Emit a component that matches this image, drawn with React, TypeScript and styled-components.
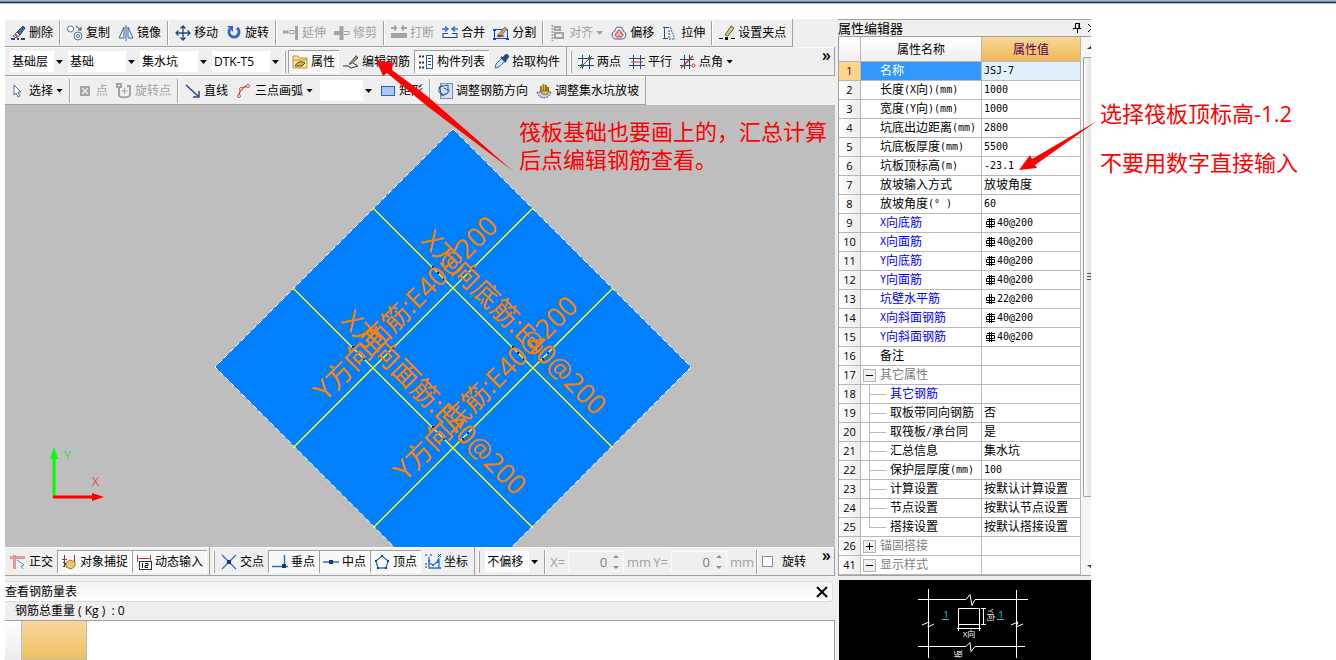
import React, { Fragment, ReactNode } from "react";
import styled, { createGlobalStyle, css } from "styled-components";

const UI_FONT = '"Open Sans", "Noto Sans CJK SC", sans-serif';
const FACE = "#efefef";
const EDGE = "#a0a0a0";

const GlobalStyle = createGlobalStyle`
  * { box-sizing: border-box; }
  body { margin: 0; background: #fff; color: #000; font: 12px/16px ${UI_FONT}; }
  button, input, select { font: inherit; color: inherit; margin: 0; }
  svg { display: block; flex: none; }
`;

/* ---------- page frame ---------- */

const Page = styled.div`
  display: flex;
  flex-direction: column;
  height: 100vh;
  overflow: hidden;
`;

const TopEdge = styled.div`
  flex: none;
  height: 4px;
  background: linear-gradient(#9db8d2 0 1px, #6f8ea9 1px 2px, #1d3448 2px 3px, #b9bfc1 3px);
`;

const Body = styled.div`
  flex: 1;
  min-height: 0;
  display: flex;
  padding: 15px 0 0 5px;
`;

const AppWindow = styled.div`
  flex: 1;
  min-width: 0;
  display: flex;
  gap: 3px;
  background: ${FACE};
`;

const Workspace = styled.main`
  position: relative;
  flex: 1;
  min-width: 0;
  display: flex;
  flex-direction: column;
`;

/* ---------- toolbars ---------- */

const ToolRow = styled.div<{ $short?: boolean }>`
  flex: none;
  display: flex;
  height: ${(p) => (p.$short ? 28 : 29)}px;
`;

const Strip = styled.div<{ $grow?: boolean; $grip?: boolean }>`
  display: flex;
  align-items: center;
  flex: ${(p) => (p.$grow ? "1" : "none")};
  min-width: 0;
  padding-top: 1px;
  padding-left: ${(p) => (p.$grip ? 3 : 1)}px;
  padding-right: ${(p) => (p.$grow ? 0 : 2)}px;
  border: solid ${EDGE};
  border-width: 0 1px 1px 0;
  box-shadow: inset 0 1px #fafafa;
`;

const Grip = styled.span`
  flex: none;
  width: 2px;
  height: 22px;
  margin-right: 2px;
  border-left: 1px solid #fff;
  border-right: 1px solid ${EDGE};
`;

const Divider = styled.span`
  flex: none;
  width: 2px;
  height: 24px;
  margin: 0 2px;
  border-left: 1px solid ${EDGE};
  border-right: 1px solid #fff;
`;

const pressedLook = css`
  background: #f8f8f8;
  box-shadow: inset 1px 1px ${EDGE}, inset -1px -1px #fff;
`;

const ToolButton = styled.button<{ $pressed?: boolean }>`
  flex: none;
  display: flex;
  align-items: center;
  gap: 3px;
  height: 23px;
  padding: 0 4px;
  border: 0;
  background: none;
  white-space: nowrap;
  &:disabled { color: #a2a2a2; }
  ${(p) => p.$pressed && pressedLook}
`;

const Caret = styled.span`
  width: 7px;
  height: 4px;
  background: currentColor;
  clip-path: polygon(0 0, 100% 0, 50% 100%);
`;

const Overflow = styled.button`
  flex: none;
  align-self: flex-start;
  margin-left: auto;
  padding: 0 3px;
  border: 0;
  background: none;
  font-size: 16px;
  line-height: 14px;
  font-weight: 600;
`;

const ComboBox = styled.span<{ $w: number }>`
  flex: none;
  position: relative;
  width: ${(p) => p.$w}px;
  height: 21px;
  background: #fff;
`;

const ComboSelect = styled.select`
  appearance: none;
  width: 100%;
  height: 100%;
  padding: 0 0 0 2px;
  border: 0;
  border-radius: 0;
  background: linear-gradient(${FACE}, ${FACE}) right / 10px 100% no-repeat #fff;
`;

const ComboCaret = styled(Caret)`
  position: absolute;
  right: 1px;
  top: 9px;
  pointer-events: none;
`;

const ComboGroup = styled.div<{ $inset?: boolean }>`
  display: flex;
  gap: 4px;
  margin: 0 ${(p) => (p.$inset ? 3 : 4)}px;
`;

function Combo({ label, options, width }: { label: string; options: string[]; width: number }) {
  return (
    <ComboBox $w={width}>
      <ComboSelect aria-label={label} defaultValue={options[0]}>
        {options.map((o) => (
          <option key={o}>{o}</option>
        ))}
      </ComboSelect>
      <ComboCaret />
    </ComboBox>
  );
}

/* ---------- icons ---------- */

const NAVY = "#26477c";
const GREY = "#a3a3a3";

const icons: Record<string, ReactNode> = {
  erase: (
    <>
      <path d="M1 14h4M7 14h2M11 14h4" stroke={NAVY} strokeWidth="2" />
      <path d="M3 11l5-5 3 3-5 4z" fill="#fff" stroke="#34588c" />
      <path d="M7 7l6-6 2 2-5 7z" fill="#3c69ad" stroke={NAVY} />
      <path d="M5 9l3 3" stroke="#d4542e" strokeWidth="2" />
    </>
  ),
  copy: (
    <>
      <circle cx="3.500" cy="4" r="3" fill="#fff" stroke="#5a7287" />
      <circle cx="11" cy="11" r="4" fill="#e6eef5" stroke="#5a7287" />
      <circle cx="11" cy="11" r="1.500" fill="none" stroke="#5a7287" />
      <path d="M9 1l5 4M14 2v3h-3" fill="none" stroke={NAVY} />
    </>
  ),
  mirror: (
    <>
      <path d="M6 2v11H1zM10 2v11h5z" fill="#e3eefb" stroke="#3465a8" />
      <path d="M8 0v16" stroke="#3465a8" />
    </>
  ),
  move: (
    <path
      d="M8 1v14M1 8h14M5.500 3.500L8 1l2.500 2.500M5.500 12.500L8 15l2.500-2.500M3.500 5.500L1 8l2.500 2.500M12.500 5.500L15 8l-2.500 2.500"
      fill="none"
      stroke={NAVY}
      strokeWidth="1.300"
    />
  ),
  rotate: (
    <>
      <path d="M4 4a5 5 0 1 0 7-1" fill="none" stroke="#3567c2" strokeWidth="3" />
      <path d="M1 1h6v6z" fill="#3567c2" />
    </>
  ),
  extend: (
    <>
      <path d="M13.500 1v14" stroke={GREY} strokeWidth="3" />
      <path d="M0 7h5" stroke={GREY} strokeWidth="3" />
      <path d="M6 5.500h5v3H6z" fill="none" stroke={GREY} />
    </>
  ),
  trim: (
    <>
      <path d="M7.500 1v14" stroke={GREY} strokeWidth="4" />
      <path d="M0 8h6" stroke={GREY} strokeWidth="4" />
      <path d="M10 6.500h5v3h-5" fill="none" stroke={GREY} />
    </>
  ),
  breakLine: (
    <>
      <path d="M0 3h6M10 3h6M4 0.500v5M12 0.500v5" stroke={GREY} strokeWidth="2" />
      <path d="M0 10.500h16" stroke={GREY} strokeWidth="5" />
    </>
  ),
  merge: (
    <>
      <path d="M0 4h5M16 4h-5M3 1.500L6 4 3 6.500M13 1.500L10 4l3 2.500" fill="none" stroke="#3a6fc4" strokeWidth="1.500" />
      <path d="M1 8.500h5M10 8.500h5M1 12.500h14M1 8v5M15 8v5" stroke={NAVY} fill="none" />
    </>
  ),
  split: (
    <>
      <rect x="1.500" y="4.500" width="13" height="9" fill="#dce9ff" stroke="#1746c8" />
      <path d="M0 14h3M13 14h3M0 5h3" stroke="#1746c8" strokeWidth="2" />
      <path d="M4 11l8-9 2 2-7 8z" fill="#d99a5b" stroke="#774" />
      <path d="M5 11h6" stroke="#112" />
    </>
  ),
  align: (
    <>
      <path d="M2.500 0v16" stroke={GREY} strokeDasharray="2 1" strokeWidth="2" />
      <path d="M5 2h5v3H5zM5 8h8v5H5z" fill="none" stroke={GREY} strokeWidth="2" />
    </>
  ),
  offset: (
    <>
      <path d="M8 2c3 0 4 2 4 4 4 1 4 8-1 8H5C0 14 0 7 4 6c0-2 1-4 4-4z" fill="#edf1f8" stroke="#3c5f96" />
      <path d="M8 5c1 0 2 1 2 3 3 0 2 4 0 4H6c-2 0-3-4 0-4 0-2 1-3 2-3z" fill="#f5a9a0" stroke="#cc3d34" />
    </>
  ),
  stretch: (
    <>
      <path d="M2.500 2v12M1 2.500h6M1 13.500h5" stroke="#2c5599" />
      <path d="M8 2l5 12M7 5v9h6" fill="none" stroke="#2c5599" strokeDasharray="2 1" />
    </>
  ),
  grips: (
    <>
      <path d="M0 13.500h4M12 13.500h4" stroke="#111" />
      <path d="M6 12h3v3H6z" fill="#111" />
      <path d="M6 10l6-9 3 2-6 8z" fill="#dcc98a" stroke="#665a30" />
    </>
  ),
  props: (
    <>
      <path d="M1 14V2h5l2 2h7v10z" fill="#fbe2a0" stroke="#cf8d2a" />
      <path d="M1 6h14" stroke="#cf8d2a" />
      <path d="M3 12c3-5 6-5 10-3l-3 3z" fill="#d8b04a" stroke="#4a4a2a" />
    </>
  ),
  editBar: (
    <>
      <path d="M0 12h5l3 2 7-2M10 9l5 3" fill="none" stroke="#333" />
      <path d="M6 10l7-8 2 2-7 6z" fill="#8fa678" stroke="#5a5a34" />
      <path d="M12 3l1-2 2 2z" fill="#c0452c" />
    </>
  ),
  list: (
    <>
      <path d="M1 2.500h5M1 8.500h5M1 13.500h5" stroke="#333" strokeDasharray="2 1" strokeWidth="2" />
      <rect x="8.500" y="1.500" width="6" height="13" fill="#fff" stroke="#2c5599" />
      <path d="M10 4.500h3M10 7.500h3M10 10.500h3" stroke="#2c5599" />
    </>
  ),
  picker: (
    <>
      <path d="M2 14l1-4 6-6 3 3-6 6z" fill="#cfe3f6" stroke="#326fae" />
      <path d="M8 3l5 5M10 5l2-3c2-2 4 0 2 2l-2 3z" fill="#204a86" stroke="#204a86" strokeWidth="2" />
    </>
  ),
  twoPoint: (
    <>
      <path d="M4.500 1v14M11.500 1v14M0 4.500h16M0 11.500h16" stroke={NAVY} />
      <path d="M2 14L14 2" stroke="#b02a2a" />
      <path d="M3 10h3v3H3zM10 3h3v3h-3z" fill="#2f7a2f" />
    </>
  ),
  parallel: (
    <>
      <path d="M4.500 1v14M11.500 1v14" stroke={NAVY} />
      <path d="M0 4.500h16" stroke={NAVY} />
      <path d="M0 11.500h16" stroke={NAVY} />
      <path d="M2 8h12" stroke="#c03434" />
    </>
  ),
  pointAngle: (
    <>
      <path d="M4.500 1v14M9.500 1v14M0 5.500h14M0 11.500h11" stroke={NAVY} />
      <path d="M1 14L13 2" stroke="#c03434" strokeWidth="1.500" />
      <circle cx="13.500" cy="11.500" r="1.500" fill="none" stroke="#d22" />
    </>
  ),
  cursor: <path d="M4 2v10l2-2 2 4 2-1-2-4h3z" fill="#fff" stroke="#5b6f92" />,
  point: (
    <>
      <path d="M3 3h10v10H3z" fill={GREY} />
      <path d="M5 5l6 6M11 5l-6 6" stroke="#eee" strokeWidth="1.500" />
    </>
  ),
  rotatePoint: (
    <>
      <path d="M1 1h4v3H1zM3 4v8c0 3 10 3 11 0V3h-3" fill="none" stroke={GREY} strokeWidth="2" />
      <path d="M8.500 5v6M5.500 8h6" stroke={GREY} />
    </>
  ),
  line: (
    <>
      <path d="M1 2l12 11" stroke={NAVY} strokeWidth="1.500" />
      <path d="M14 8v6H8" fill="none" stroke={NAVY} strokeWidth="1.500" />
    </>
  ),
  arc: (
    <>
      <path d="M3 14C3 7 7 3 13 3" fill="none" stroke="#c8503c" strokeWidth="1.500" />
      <circle cx="3" cy="13" r="1.500" fill="#fff" stroke="#c8503c" />
      <circle cx="5" cy="6" r="1.500" fill="#fff" stroke="#c8503c" />
      <circle cx="12" cy="3" r="1.500" fill="#fff" stroke="#c8503c" />
    </>
  ),
  rect: <rect x="1.500" y="3.500" width="13" height="9" fill="#a9c7f8" stroke="#2a5bc0" />,
  barDir: (
    <>
      <rect x="3.500" y="0.500" width="12" height="15" fill="#d3e1f6" stroke="#6f8fc0" />
      <path d="M2 4l9-2v8l-6 3zM5 2c-6 5-3 11 4 9M7 5l6 3" fill="none" stroke="#35598f" />
    </>
  ),
  slope: (
    <>
      <path d="M1 9c2 8 12 8 14 0z" fill="#bcd4f2" stroke="#3562a4" strokeDasharray="2 1" />
      <path d="M5 8V3M7.500 8V1M10 8V2M12 8V4" stroke="#a07a10" strokeWidth="2" />
      <path d="M4 8h9c0 4-6 5-9 0z" fill="#f1c94c" stroke="#80600c" />
    </>
  ),
  ortho: (
    <>
      <path d="M0 3.500h15M4.500 1v14" stroke="#dd9b9b" strokeWidth="3" />
      <path d="M7 6l7 5-3 1 2 3" fill="#fff" stroke="#6a7fa0" />
    </>
  ),
  snap: (
    <>
      <path d="M3.500 1v12M13.500 1v8M1 5.500h5" stroke="#9b3434" />
      <path d="M5 9l4-3 5 2v4l-4 3-5-2z" fill="#e9c877" stroke="#9a7833" />
      <path d="M2 8l3 2-3 3" fill="none" stroke="#333" />
    </>
  ),
  dynamic: (
    <>
      <path d="M1.500 1v7M14.500 1v7M1 4.500h14" stroke="#b04848" />
      <rect x="3.500" y="7.500" width="12" height="8" fill="#fff" stroke="#333" />
      <path d="M6.500 9v5M9 9.500h3v2H9v2h3" fill="none" stroke="#111" />
    </>
  ),
  intersect: (
    <>
      <path d="M1 1l14 14M15 1L1 15" stroke="#2a6fd0" strokeWidth="1.300" />
      <path d="M6 6h4v4H6z" fill="#123a86" />
    </>
  ),
  perp: (
    <>
      <path d="M12.500 1v13M0 12.500h16" stroke="#2a6fd0" strokeWidth="1.500" />
      <path d="M10 10h4v4h-4z" fill="#123a86" />
    </>
  ),
  mid: (
    <>
      <path d="M0 8h16" stroke="#2a6fd0" strokeWidth="1.500" />
      <path d="M6 6h4v4H6z" fill="#123a86" />
    </>
  ),
  vertex: (
    <>
      <path d="M8 2l6 5-2 7H4L2 7z" fill="#fff" stroke="#2a6fd0" strokeWidth="1.300" />
      <path d="M7 1h2v2H7zM13 6h2v2h-2zM1 6h2v2H1zM3 13h2v2H3zM11 13h2v2h-2z" fill="#123a86" />
    </>
  ),
  coord: (
    <>
      <path d="M4 3v11h12M4 9l4 2 4-3 2-4M14 5v9" fill="none" stroke="#2a6fd0" strokeWidth="1.300" />
      <path d="M3 6h2v2H3zM7 10h2v2H7zM12 7h2v2h-2z" fill="#2a6fd0" />
      <path d="M0 1h2M5 1h2M13 0l3 3M16 0l-3 3M0 10h2M0 13h2" stroke="#123a86" />
    </>
  ),
};

function Icon({ name }: { name: string }) {
  return (
    <svg width="16" height="16" viewBox="0 0 16 16" fill="none" aria-hidden="true">
      {icons[name]}
    </svg>
  );
}

type ToolDef = { icon: string; label: string; off?: boolean; on?: boolean; menu?: boolean };

function Tools({ groups }: { groups: ToolDef[][] }) {
  return (
    <>
      {groups.map((group, g) => (
        <Fragment key={g}>
          {g > 0 && <Divider />}
          {group.map((t) => (
            <ToolButton key={t.label} type="button" disabled={t.off} $pressed={t.on} aria-pressed={t.on}>
              <Icon name={t.icon} />
              {t.label}
              {t.menu && <Caret />}
            </ToolButton>
          ))}
        </Fragment>
      ))}
    </>
  );
}

const editTools: ToolDef[][] = [
  [{ icon: "erase", label: "删除" }],
  [{ icon: "copy", label: "复制" }, { icon: "mirror", label: "镜像" }],
  [{ icon: "move", label: "移动" }, { icon: "rotate", label: "旋转" }],
  [{ icon: "extend", label: "延伸", off: true }, { icon: "trim", label: "修剪", off: true }],
  [{ icon: "breakLine", label: "打断", off: true }, { icon: "merge", label: "合并" }, { icon: "split", label: "分割" }],
  [
    { icon: "align", label: "对齐", off: true, menu: true },
    { icon: "offset", label: "偏移" },
    { icon: "stretch", label: "拉伸" },
  ],
  [{ icon: "grips", label: "设置夹点" }],
];

const componentTools: ToolDef[][] = [
  [
    { icon: "props", label: "属性", on: true },
    { icon: "editBar", label: "编辑钢筋" },
    { icon: "list", label: "构件列表", on: true },
    { icon: "picker", label: "拾取构件" },
  ],
];

const axisTools: ToolDef[][] = [
  [
    { icon: "twoPoint", label: "两点" },
    { icon: "parallel", label: "平行" },
    { icon: "pointAngle", label: "点角", menu: true },
  ],
];

const drawTools: ToolDef[][] = [
  [{ icon: "cursor", label: "选择", menu: true }],
  [{ icon: "point", label: "点", off: true }, { icon: "rotatePoint", label: "旋转点", off: true }],
  [{ icon: "line", label: "直线" }, { icon: "arc", label: "三点画弧", menu: true }],
];

const shapeTools: ToolDef[][] = [
  [{ icon: "rect", label: "矩形" }],
  [{ icon: "barDir", label: "调整钢筋方向" }, { icon: "slope", label: "调整集水坑放坡" }],
];

const modeTools: ToolDef[][] = [
  [
    { icon: "ortho", label: "正交" },
    { icon: "snap", label: "对象捕捉", on: true },
    { icon: "dynamic", label: "动态输入", on: true },
  ],
];

const snapTools: ToolDef[][] = [
  [
    { icon: "intersect", label: "交点" },
    { icon: "perp", label: "垂点", on: true },
    { icon: "mid", label: "中点", on: true },
    { icon: "vertex", label: "顶点", on: true },
    { icon: "coord", label: "坐标" },
  ],
];

/* ---------- drawing area ---------- */

const Canvas = styled.div`
  flex: 1;
  min-height: 0;
  overflow: hidden;
  background: #bebebe;
`;

const BarText = styled.text`
  font: 27px ${UI_FONT};
  fill: #ff8000;
`;

const AxisText = styled.text`
  font: 300 13px ${UI_FONT};
`;

const crossings = [
  [448, 183],
  [368, 263],
  [528, 263],
  [448, 343],
];

function Drawing() {
  return (
    <svg width="100%" height="100%" role="img" aria-label="集水坑">
      <path d="M448 24L686 262 448 501 210 262z" fill="#0080ff" stroke="#fff" strokeDasharray="5 3" />
      <path
        d="M368 103L608 343M288 183L528 423M528 103L288 343M608 183L368 423"
        stroke="#ffff00"
        strokeWidth="1.400"
      />
      {crossings.map(([x, y]) => (
        <path
          key={`${x}-${y}`}
          d={`M${x - 21} ${y - 21}h2M${x - 16} ${y - 15}h2M${x - 10} ${y - 9}h2M${x + 19} ${y - 20}h2M${x + 14} ${y - 15}h2M${x + 9} ${y - 9}h2`}
          stroke="#1020b0"
          strokeWidth="2"
        />
      ))}
      <BarText transform="translate(415 137) rotate(45)">X方向底筋:E40@200</BarText>
      <BarText transform="translate(335 217) rotate(45)">X方向面筋:E40@200</BarText>
      <BarText transform="translate(320 297) rotate(-45)">Y方向面筋:E40@200</BarText>
      <BarText transform="translate(400 377) rotate(-45)">Y方向底筋:E40@200</BarText>
      <path d="M49 392V352" stroke="#00ff00" strokeWidth="3" />
      <path d="M49 342l4 12h-8z" fill="#00ff00" />
      <path d="M48 392h41" stroke="#ff0000" strokeWidth="3" />
      <path d="M99 392l-12 4v-8z" fill="#ff0000" />
      <AxisText x="59" y="355" fill="#00e000">Y</AxisText>
      <AxisText x="87" y="381" fill="#ff0000">X</AxisText>
    </svg>
  );
}

/* ---------- offset fields ---------- */

const OffsetLabel = styled.label`
  flex: none;
  display: flex;
  align-items: center;
  gap: 3px;
  margin-left: 2px;
  color: #a2a2a2;
  font-size: 13px;
`;

const SpinBox = styled.span`
  display: flex;
  align-items: center;
  width: 56px;
  height: 21px;
  padding-right: 4px;
  border: 1px solid #fafafa;
`;

const SpinInput = styled.input`
  flex: 1;
  min-width: 0;
  padding: 0 6px 0 0;
  border: 0;
  background: none;
  text-align: right;
  color: #808080;
`;

function OffsetField({ axis }: { axis: string }) {
  return (
    <OffsetLabel>
      {axis}=
      <SpinBox>
        <SpinInput defaultValue="0" disabled />
        <svg width="6" height="14" viewBox="0 0 6 14" fill="#909090" aria-hidden="true">
          <path d="M0 3l3-3 3 3zM0 11l3 3 3-3z" />
        </svg>
      </SpinBox>
      mm
    </OffsetLabel>
  );
}

const CheckLabel = styled.label`
  flex: none;
  display: flex;
  align-items: center;
  gap: 9px;
  margin-left: 2px;
`;

const CheckBox = styled.input`
  appearance: none;
  width: 11px;
  height: 11px;
  border: 1px solid #8e8f8f;
  background: #fff;
`;

/* ---------- quantity table pane ---------- */

const QuantityPane = styled.section`
  flex: none;
  margin-top: 5px;
`;

const PaneTitle = styled.header`
  display: flex;
  align-items: center;
  justify-content: space-between;
  height: 21px;
  margin-right: 2px;
  padding-right: 3px;
  border: solid #dcdcdc;
  border-width: 1px 1px 1px 0;
  border-radius: 0 4px 4px 0;
  background: linear-gradient(#f4f4f4, #fff);
`;

const CloseButton = styled.button`
  display: flex;
  padding: 0;
  border: 0;
  background: none;
`;

const TotalLine = styled.p`
  height: 18px;
  margin: 0;
  padding-left: 10px;
  line-height: 17px;
  white-space: pre;
`;

const QuantityGrid = styled.div`
  display: flex;
  height: 40px;
  border: solid ${EDGE};
  border-width: 1px 1px 0 0;
  background: #fff;
`;

const GridCorner = styled.span`
  width: 16px;
  background: linear-gradient(#fff, #ececec);
`;

const GridHead = styled.span`
  width: 66px;
  border: 1px solid #bdbdbd;
  border-top: 0;
  background: linear-gradient(#f9d79c, #efc060);
`;

/* ---------- property editor ---------- */

const Inspector = styled.aside`
  position: relative;
  flex: none;
  width: 253px;
  display: flex;
  flex-direction: column;
`;

const InspectorTitle = styled.header`
  flex: none;
  display: flex;
  align-items: center;
  height: 18px;
  border: solid ${EDGE};
  border-width: 1px 0;
  font-size: 13px;
`;

const TitleIcons = styled.span`
  margin-left: auto;
`;

const PropertyArea = styled.div`
  flex: none;
  display: flex;
  border-bottom: 1px solid ${EDGE};
  border-left: 1px solid ${EDGE};
  background: #fff;
`;

const PropertyTable = styled.table`
  width: 242px;
  table-layout: fixed;
  border-collapse: separate;
  border-spacing: 0;
`;

const HeadCell = styled.th<{ $w: number; $hot?: boolean }>`
  width: ${(p) => p.$w}px;
  height: 25px;
  padding: 1px 0 0;
  border: solid #b8b8b8;
  border-width: 0 1px 1px 0;
  font-weight: 400;
  background: ${(p) => (p.$hot ? "linear-gradient(#f9d795, #edb95c)" : "linear-gradient(#fff, #f0f0f0)")};
  color: ${(p) => (p.$hot ? "#5a0050" : "#000")};
`;

const NumberCell = styled.th<{ $hot?: boolean }>`
  height: 19px;
  padding: 0;
  border: solid #b8b8b8;
  border-width: 0 1px 1px 0;
  font-weight: 400;
  font-size: 11px;
  background: ${(p) => (p.$hot ? "#ffd58d" : "linear-gradient(90deg, #fff, #ececec)")};
  color: ${(p) => (p.$hot ? "#5a0050" : "#000")};
`;

const Cell = styled.td<{ $bg?: string; $color?: string }>`
  height: 19px;
  padding: 0;
  border: solid #b8b8b8;
  border-width: 0 1px 1px 0;
  background: ${(p) => p.$bg || "#fff"};
  color: ${(p) => p.$color || "#000"};
`;

const CellLine = styled.div<{ $value?: boolean }>`
  display: flex;
  align-items: center;
  height: 18px;
  padding-left: ${(p) => (p.$value ? 2 : 0)}px;
  overflow: hidden;
  white-space: pre;
`;

const Gutter = styled.span`
  flex: none;
  display: flex;
  width: 19px;
  padding-left: 2px;
`;

const Expander = styled.button`
  display: flex;
  width: 13px;
  height: 13px;
  padding: 1px;
  border: 1px solid #b4b4b4;
  background: #f0f0f0;
`;

const Branch = styled.span<{ $last?: boolean }>`
  flex: none;
  align-self: stretch;
  width: 17px;
  margin: 0 4px 0 8px;
  background:
    linear-gradient(#b8b8b8, #b8b8b8) 0 0 / 1px ${(p) => (p.$last ? "50%" : "100%")} no-repeat,
    linear-gradient(#b8b8b8, #b8b8b8) 0 50% / 100% 1px no-repeat;
`;

const Narrow = styled.span`
  font: 10px/16px "DejaVu Sans Mono", monospace;
`;

const ScrollTrack = styled.div`
  flex: 1;
  display: flex;
  flex-direction: column;
  justify-content: space-between;
  align-items: flex-end;
  padding: 9px 0 7px 2px;
  overflow: hidden;
  background: #f4f4f4;
`;

const ScrollThumb = styled.div`
  display: flex;
  align-items: center;
  justify-content: flex-end;
  width: 8px;
  height: 440px;
  margin-bottom: auto;
  margin-top: 8px;
  border: 1px solid ${EDGE};
  border-right: 0;
  border-radius: 2px 0 0 2px;
  background: linear-gradient(90deg, #fbfbfb, #dcdcdc);
`;

const Preview = styled.div`
  flex: 1;
  min-height: 0;
  margin: 4px 0 0 1px;
  overflow: hidden;
  background: #000;
`;

const PreviewText = styled.text`
  font: 8px ${UI_FONT};
  fill: #fff;
  text-anchor: middle;
`;

const SectionMark = styled(PreviewText)`
  font-size: 9px;
  fill: #00e0e0;
`;

function Mixed({ text }: { text: string }) {
  return (
    <>
      {text.split(/([\x20-\x7e°]+)/).map((part, i) => (i % 2 ? <Narrow key={i}>{part}</Narrow> : part))}
    </>
  );
}

function RebarSign({ grade }: { grade: number }) {
  return (
    <svg width="13" height="12" viewBox="0 0 13 12" fill="none" stroke="#000" aria-label="钢筋">
      <path d={grade === 4 ? "M3 2.500h8M2 9.500h9" : "M2 9.500h9"} />
      <path d="M2.500 4.500h8v3h-8zM5.500 1v10M7.500 1v10" />
    </svg>
  );
}

type Row = {
  n: number;
  name: string;
  value?: string;
  kind?: "blue" | "group" | "closed" | "child" | "childBlue" | "last";
  rebar?: number;
};

const rows: Row[] = [
  { n: 1, name: "名称", value: "JSJ-7" },
  { n: 2, name: "长度(X向)(mm)", value: "1000" },
  { n: 3, name: "宽度(Y向)(mm)", value: "1000" },
  { n: 4, name: "坑底出边距离(mm)", value: "2800" },
  { n: 5, name: "坑底板厚度(mm)", value: "5500" },
  { n: 6, name: "坑板顶标高(m)", value: "-23.1" },
  { n: 7, name: "放坡输入方式", value: "放坡角度" },
  { n: 8, name: "放坡角度(° )", value: "60" },
  { n: 9, name: "X向底筋", value: "40@200", kind: "blue", rebar: 4 },
  { n: 10, name: "X向面筋", value: "40@200", kind: "blue", rebar: 4 },
  { n: 11, name: "Y向底筋", value: "40@200", kind: "blue", rebar: 4 },
  { n: 12, name: "Y向面筋", value: "40@200", kind: "blue", rebar: 4 },
  { n: 13, name: "坑壁水平筋", value: "22@200", kind: "blue", rebar: 3 },
  { n: 14, name: "X向斜面钢筋", value: "40@200", kind: "blue", rebar: 4 },
  { n: 15, name: "Y向斜面钢筋", value: "40@200", kind: "blue", rebar: 4 },
  { n: 16, name: "备注" },
  { n: 17, name: "其它属性", kind: "group" },
  { n: 18, name: "其它钢筋", kind: "childBlue" },
  { n: 19, name: "取板带同向钢筋", value: "否", kind: "child" },
  { n: 20, name: "取筏板/承台同", value: "是", kind: "child" },
  { n: 21, name: "汇总信息", value: "集水坑", kind: "child" },
  { n: 22, name: "保护层厚度(mm)", value: "100", kind: "child" },
  { n: 23, name: "计算设置", value: "按默认计算设置", kind: "child" },
  { n: 24, name: "节点设置", value: "按默认节点设置", kind: "child" },
  { n: 25, name: "搭接设置", value: "按默认搭接设置", kind: "last" },
  { n: 26, name: "锚固搭接", kind: "closed" },
  { n: 41, name: "显示样式", kind: "group" },
];

function nameColor(row: Row) {
  if (row.n === 1) return "#fff";
  if (row.kind === "blue" || row.kind === "childBlue") return "#0000ff";
  if (row.kind === "group" || row.kind === "closed") return "#808080";
  return "#000";
}

function RowLead({ kind }: { kind: Row["kind"] }) {
  if (kind === "child" || kind === "childBlue" || kind === "last") return <Branch $last={kind === "last"} />;
  if (kind === "group" || kind === "closed") {
    return (
      <Gutter>
        <Expander type="button" aria-label={kind === "closed" ? "展开" : "折叠"}>
          <svg width="9" height="9" viewBox="0 0 9 9" stroke="#000" aria-hidden="true">
            <path d={kind === "closed" ? "M1 4.500h7M4.500 1v7" : "M1 4.500h7"} />
          </svg>
        </Expander>
      </Gutter>
    );
  }
  return <Gutter />;
}

/* ---------- red annotations ---------- */

const ArrowOverlay = styled.svg<{ $x: number; $y: number }>`
  position: absolute;
  left: ${(p) => p.$x}px;
  top: ${(p) => p.$y}px;
  fill: #ff0000;
  pointer-events: none;
  z-index: 1;
`;

const noteText = css`
  margin: 0;
  color: #ff0000;
  font-size: 22px;
  white-space: nowrap;
`;

const CanvasNote = styled.p`
  ${noteText}
  position: absolute;
  left: 514px;
  top: 98px;
  line-height: 28px;
`;

const SideNotes = styled.div`
  flex: none;
  width: 245px;
  padding: 80px 0 0 9px;
`;

const SideNote = styled.p`
  ${noteText}
  line-height: 28px;
  margin-bottom: 21px;
`;

export default function App() {
  return (
    <>
      <GlobalStyle />
      <Page>
        <TopEdge />
        <Body>
          <AppWindow>
            <Workspace>
              <ToolRow $short>
                <Strip>
                  <Tools groups={editTools} />
                </Strip>
              </ToolRow>
              <ToolRow>
                <Strip>
                  <ComboGroup>
                    <Combo label="楼层" options={["基础层"]} width={54} />
                    <Combo label="构件类别" options={["基础"]} width={68} />
                    <Combo label="构件类型" options={["集水坑"]} width={68} />
                    <Combo label="构件" options={["DTK-T5"]} width={68} />
                  </ComboGroup>
                  <Grip />
                  <Tools groups={componentTools} />
                </Strip>
                <Strip $grow $grip>
                  <Grip />
                  <Tools groups={axisTools} />
                  <Overflow type="button" aria-label="更多">»</Overflow>
                </Strip>
              </ToolRow>
              <ToolRow>
                <Strip>
                  <Tools groups={drawTools} />
                  <ComboGroup $inset>
                    <Combo label="绘制参数" options={[""]} width={53} />
                  </ComboGroup>
                  <Tools groups={shapeTools} />
                </Strip>
              </ToolRow>
              <Canvas>
                <Drawing />
              </Canvas>
              <ToolRow>
                <Strip>
                  <Tools groups={modeTools} />
                </Strip>
                <Strip $grip>
                  <Grip />
                  <Tools groups={snapTools} />
                </Strip>
                <Strip $grow $grip>
                  <Grip />
                  <ComboGroup $inset>
                    <Combo label="偏移方式" options={["不偏移"]} width={54} />
                  </ComboGroup>
                  <Divider />
                  <OffsetField axis="X" />
                  <OffsetField axis="Y" />
                  <Divider />
                  <CheckLabel>
                    <CheckBox type="checkbox" />
                    旋转
                  </CheckLabel>
                  <Overflow type="button" aria-label="更多">»</Overflow>
                </Strip>
              </ToolRow>
              <QuantityPane>
                <PaneTitle>
                  查看钢筋量表
                  <CloseButton type="button" aria-label="关闭">
                    <svg width="14" height="14" viewBox="0 0 14 14" stroke="#000" strokeWidth="2" aria-hidden="true">
                      <path d="M2 2l10 10M12 2L2 12" />
                    </svg>
                  </CloseButton>
                </PaneTitle>
                <TotalLine>{"钢筋总重量 ( Kg )  : 0"}</TotalLine>
                <QuantityGrid>
                  <GridCorner />
                  <GridHead />
                </QuantityGrid>
              </QuantityPane>
              <CanvasNote>
                筏板基础也要画上的，汇总计算
                <br />
                后点编辑钢筋查看。
              </CanvasNote>
              <ArrowOverlay $x={371} $y={41} width="138" height="112" viewBox="0 0 138 112" aria-hidden="true">
                <path d="M0 0L17 3 16 10 51 36 137 111 51 46 11 13 7 16z" />
              </ArrowOverlay>
            </Workspace>
            <Inspector>
              <InspectorTitle>
                属性编辑器
                <TitleIcons>
                  <svg width="22" height="12" viewBox="0 0 22 12" fill="none" stroke="#000" aria-hidden="true">
                    <path d="M6.500 1.500h4v5h-4zM10 1v6M4 6.500h8M8.500 7v4M19 2l3 3M19 10l3-3" />
                  </svg>
                </TitleIcons>
              </InspectorTitle>
              <PropertyArea>
                <PropertyTable>
                  <thead>
                    <tr>
                      <HeadCell $w={22} aria-label="序号" />
                      <HeadCell $w={121}>属性名称</HeadCell>
                      <HeadCell $w={99} $hot>属性值</HeadCell>
                    </tr>
                  </thead>
                  <tbody>
                    {rows.map((row) => (
                      <tr key={row.n}>
                        <NumberCell $hot={row.n === 1} scope="row">{row.n}</NumberCell>
                        <Cell $bg={row.n === 1 ? "#3399ff" : undefined} $color={nameColor(row)}>
                          <CellLine>
                            <RowLead kind={row.kind} />
                            <Mixed text={row.name} />
                          </CellLine>
                        </Cell>
                        <Cell $bg={row.n === 1 ? "#e0f0ff" : undefined}>
                          <CellLine $value>
                            {row.rebar && <RebarSign grade={row.rebar} />}
                            {row.value && <Mixed text={row.value} />}
                          </CellLine>
                        </Cell>
                      </tr>
                    ))}
                  </tbody>
                </PropertyTable>
                <ScrollTrack>
                  <svg width="4" height="3" viewBox="0 0 4 3" aria-hidden="true">
                    <path d="M0 3l4-3v3z" fill="#333" />
                  </svg>
                  <ScrollThumb>
                    <svg width="4" height="8" viewBox="0 0 4 8" stroke="#555" aria-hidden="true">
                      <path d="M0 0.500h4M0 3.500h4M0 6.500h4" />
                    </svg>
                  </ScrollThumb>
                  <svg width="4" height="3" viewBox="0 0 4 3" aria-hidden="true">
                    <path d="M0 0h4v3z" fill="#333" />
                  </svg>
                </ScrollTrack>
              </PropertyArea>
              <Preview>
                <svg width="252" height="80" viewBox="0 0 252 80" fill="none" stroke="#fff" role="img" aria-label="集水坑示意图">
                  <path d="M79 19.500h48M136 19.500h53M79 66.500h48M136 66.500h50M89.500 9v69M177.500 10v68" />
                  <path d="M127 19.500l4-5 2 11 3-6M127 66.500l4-4 1 9 4-5M83 45l7-3-1 5 6-3M172 45l7-3-2 5 7-3" />
                  <path d="M119.500 28.500h21v16h-21zM119.500 44v7M140.500 44v7M118 48.500h24M144.500 28v17M142 28.500h5M142 44.500h5" />
                  <g stroke="none">
                    <PreviewText x="130" y="57">X向</PreviewText>
                    <PreviewText transform="translate(149 35) rotate(90)">Y向</PreviewText>
                    <PreviewText transform="translate(122 74) rotate(-90)">板</PreviewText>
                    <SectionMark x="107" y="38">1</SectionMark>
                    <SectionMark x="162" y="38">1</SectionMark>
                  </g>
                  <path d="M103 39.500h7M158 39.500h7" stroke="#00e0e0" />
                </svg>
              </Preview>
              <ArrowOverlay $x={181} $y={102} width="79" height="50" viewBox="0 0 79 50" aria-hidden="true">
                <path d="M0 49L11 34 13 38 78 0 16 44 18 47z" />
              </ArrowOverlay>
            </Inspector>
          </AppWindow>
          <SideNotes>
            <SideNote>选择筏板顶标高-1.2</SideNote>
            <SideNote>不要用数字直接输入</SideNote>
          </SideNotes>
        </Body>
      </Page>
    </>
  );
}
